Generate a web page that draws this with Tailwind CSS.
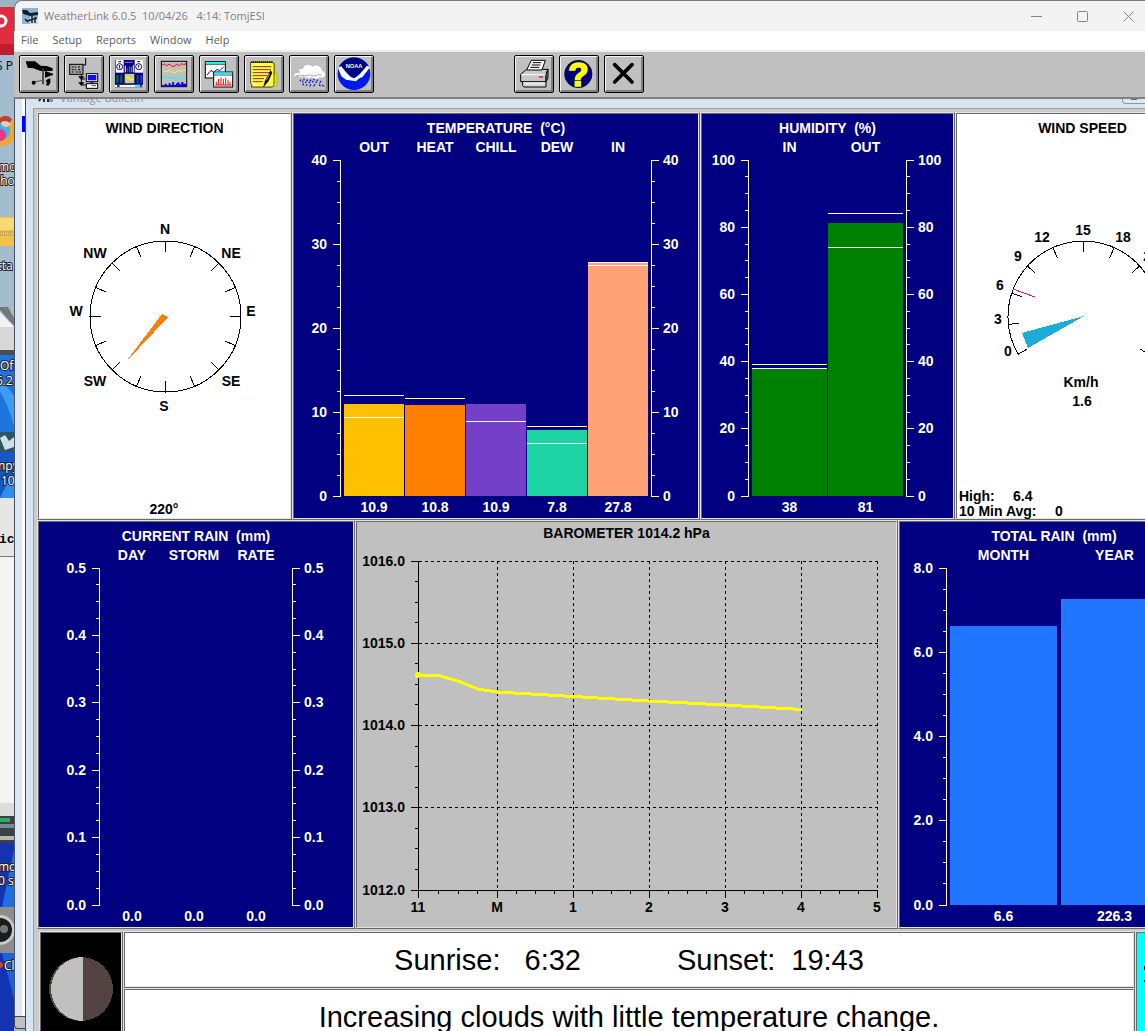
<!DOCTYPE html>
<html lang="en">
<head>
  <meta charset="UTF-8" />
  <meta name="viewport" content="width=device-width, initial-scale=1.0"/>
  <title>WeatherLink 6.0.5</title>
  <script src="https://cdn.jsdelivr.net/npm/@tailwindcss/browser@4"></script>
</head>
<body class="flex h-screen overflow-hidden bg-[#9db8cb] font-['Liberation_Sans',Arial,sans-serif]">

<!-- Desktop behind the window -->
<aside class="w-[14px] shrink-0 overflow-hidden">
  <svg width="14" height="1031" class="block" font-family="Open Sans, sans-serif" font-size="12">
    <rect width="14" height="1031" fill="#a3bdcf"/>
    <rect width="14" height="7" fill="#9fb4c3"/>
    <rect y="7" width="14" height="37" fill="#e32b3f"/>
    <rect y="44" width="14" height="11" fill="#c21a30"/>
    <circle cx="1" cy="21" r="5" fill="none" stroke="#fff" stroke-width="3"/>
    <text x="-4" y="70" fill="#000">S P</text>
    <circle cx="2" cy="131" r="15" fill="#f0a830"/>
    <circle cx="-1" cy="130" r="11" fill="#3fb3ee"/>
    <circle cx="6" cy="122" r="5" fill="#f3c9a8"/>
    <path d="M0 118q6-5 12 1l-2 4q-5-4-10 0z" fill="#b5453a"/>
    <circle cx="0" cy="135" r="6" fill="#e8368f"/>
    <text x="-2" y="171" fill="#fff" stroke="#222" stroke-width="2" paint-order="stroke">moi</text>
    <text x="-7" y="185" fill="#fff" stroke="#222" stroke-width="2" paint-order="stroke">Pho</text>
    <rect y="217" width="14" height="29" fill="#f0c24a"/>
    <rect y="218" width="14" height="12" fill="#f9d977"/>
    <path d="M0 232h14M0 235h14" stroke="#8a7a4a" stroke-dasharray="1 1"/>
    <text x="-4" y="270" fill="#fff" stroke="#222" stroke-width="2" paint-order="stroke">cta</text>
    <rect y="322" width="14" height="28" fill="#d8d8d8"/>
    <path d="M0 310l14 16v-8l-6-11h-8z" fill="#777"/>
    <path d="M0 312v15h14z" fill="#f2f2f2"/>
    <rect y="350" width="14" height="5" fill="#4b4d50"/>
    <rect y="355" width="14" height="77" fill="#1c74dc"/>
    <path d="M0 392q8 12 14 34v-30q-6-10-14-14z" fill="#3e9bf2"/>
    <text x="0" y="370" fill="#fff" stroke="#222" stroke-width="2" paint-order="stroke">Off</text>
    <text x="-4" y="385" fill="#fff" stroke="#222" stroke-width="2" paint-order="stroke">6.2</text>
    <rect y="432" width="14" height="20" fill="#2c5668"/>
    <path d="M0 438l5-3 4 6 5-4v10l-9 3z" fill="#cfe0e4"/>
    <rect y="452" width="14" height="46" fill="#1458c8"/>
    <path d="M0 498q8-18 14-22v22z" fill="#2f8df0"/>
    <text x="-2" y="470" fill="#fff" stroke="#222" stroke-width="2" paint-order="stroke">npy</text>
    <text x="1" y="485" fill="#fff" stroke="#222" stroke-width="2" paint-order="stroke">10</text>
    <rect y="498" width="14" height="59" fill="#e6e6e6"/>
    <text x="-1" y="543" font-family="Liberation Mono, monospace" font-weight="700" font-size="13">ic</text>
    <rect y="556" width="14" height="1" fill="#777"/>
    <rect y="557" width="14" height="247" fill="#f4f4f4"/>
    <rect y="803" width="14" height="13" fill="#dcdcdc"/>
    <rect y="816" width="14" height="29" fill="#3a4046"/>
    <rect y="818" width="10" height="4" fill="#2fae62"/>
    <rect y="824" width="14" height="4" fill="#7b8790"/>
    <rect y="836" width="14" height="4" fill="#b6b8b6"/>
    <rect y="843" width="14" height="188" fill="#1234b0"/>
    <path d="M14 850L2 907h12z" fill="#1d6fe6"/>
    <text x="-2" y="871" fill="#fff" stroke="#222" stroke-width="2" paint-order="stroke">moi</text>
    <text x="-2" y="885" fill="#fff" stroke="#222" stroke-width="2" paint-order="stroke">0 s</text>
    <rect y="907" width="14" height="46" fill="#8d8d8b"/>
    <circle cx="0" cy="930" r="15" fill="#c9c9c7"/>
    <circle cx="0" cy="930" r="12" fill="#191b1d"/>
    <circle cx="4" cy="929" r="4" fill="#70777b"/>
    <path d="M2 953l12 46v-46z" fill="#1a62e0"/>
    <text x="4" y="970" fill="#fff" stroke="#222" stroke-width="2" paint-order="stroke">Cl</text>
    <circle cx="0" cy="965" r="3" fill="#d8402c"/>
  </svg>
</aside>

<div class="flex min-w-0 flex-1 flex-col">

  <!-- Title bar -->
  <header class="flex h-[31px] shrink-0 items-center overflow-hidden rounded-tl-lg border-t border-l border-[#747b86] bg-[#f3f3f3] pl-[7px]">
    <svg class="mr-[6px] h-4 w-4" viewBox="0 0 16 16">
      <rect width="16" height="16" fill="#8fb4d2"/>
      <path d="M8 9h8v7H8z" fill="#c4dcec"/>
      <path d="M0 2l5 0 3 3 8-1v3L8 8 1 6z" fill="#16202a"/>
      <path d="M10 5v10M5 13l10-3M3 11l3 3M13 9v6" stroke="#16202a" stroke-width="1.5"/>
    </svg>
    <h1 class="font-['Open_Sans',sans-serif] text-[11px] whitespace-pre text-[#808080]">WeatherLink 6.0.5  10/04/26   4:14: TomjESI</h1>
    <div class="-mr-[6px] ml-auto flex h-full shrink-0 text-[#858585]">
      <button aria-label="Minimize" class="flex w-[46px] items-center justify-center"><svg width="11" height="11" fill="none" stroke="currentColor"><path d="M0 5.5h11"/></svg></button>
      <button aria-label="Maximize" class="flex w-[46px] items-center justify-center"><svg width="11" height="11" fill="none" stroke="currentColor"><rect x=".5" y=".5" width="10" height="10" rx="1"/></svg></button>
      <button aria-label="Close" class="flex w-[46px] items-center justify-center"><svg width="11" height="11" fill="none" stroke="currentColor"><path d="M.5.5l10 10M10.500.5l-10 10"/></svg></button>
    </div>
  </header>

  <nav class="flex h-[21px] shrink-0 items-center gap-[14px] border-b-2 border-[#ececec] bg-white pl-[7px] font-['Open_Sans',sans-serif] text-[11px] text-[#5c5c5c]">
    <button>File</button>
    <button>Setup</button>
    <button>Reports</button>
    <button>Window</button>
    <button>Help</button>
  </nav>

  <!-- Toolbar -->
  <div class="flex h-[47px] shrink-0 items-start gap-[5px] border-b-2 border-[#808080] bg-[#c0c0c0] pt-[3px] pl-[5px]">
    <button aria-label="Station" class="h-[38px] w-10 rounded-[2px] border border-black shadow-[inset_1px_1px_0_#f4f4f4,inset_-2px_-2px_0_#808080]">
      <svg class="h-9 w-[38px]" viewBox="3 3 114 108">
        <path d="M20 19h28l17 13 18 1 18 7v8H65l-22-8-17-2z"/>
        <path d="M72 40v48" stroke="#333" stroke-width="5"/>
        <path d="M78 48l24 8v4l-24 8z"/>
        <path d="M48 80l26-4" stroke="#555" stroke-width="3" fill="none"/>
        <circle cx="44" cy="83" r="6"/>
        <path d="M80 77l6-4 8-3v14l-6 8-8-2 4-6z"/>
      </svg>
    </button>
    <button aria-label="Download" class="h-[38px] w-10 rounded-[2px] border border-black shadow-[inset_1px_1px_0_#f4f4f4,inset_-2px_-2px_0_#808080]">
      <svg class="h-9 w-[38px]" viewBox="3 3 114 108">
        <path d="M65 9v21h-8" stroke="#000" stroke-width="3" fill="none"/>
        <rect x="17" y="28" width="40" height="30" fill="#a8a8a8" stroke="#000" stroke-width="3"/>
        <path d="M23 36h14M23 44h14M42 36h10M42 44h10M23 51h8M36 51h16" stroke="#000" stroke-width="3" stroke-dasharray="6 3"/>
        <path d="M52 58v14l12 0M52 72v18h14" stroke="#000" stroke-width="3" fill="none"/>
        <path d="M42 64h20l-10 10zM42 82h20l-10 10z"/>
        <rect x="67" y="56" width="34" height="24" fill="#fff" stroke="#000" stroke-width="3"/>
        <rect x="71" y="60" width="26" height="16" fill="#1010f0"/>
        <rect x="67" y="86" width="34" height="14" fill="#fff" stroke="#000" stroke-width="3"/>
        <path d="M78 83h12M82 92h14" stroke="#000" stroke-width="2"/>
      </svg>
    </button>
    <button aria-label="Bulletin" class="h-[38px] w-10 rounded-[2px] border border-black shadow-[inset_1px_1px_0_#f4f4f4,inset_-2px_-2px_0_#808080]">
      <svg class="h-9 w-[38px]" viewBox="3 3 114 108">
        <rect x="18" y="15" width="84" height="82" fill="#000080"/>
        <rect x="20" y="15" width="24" height="38" fill="#fff"/>
        <rect x="77" y="15" width="25" height="38" fill="#fff"/>
        <circle cx="32" cy="35" r="9" fill="#fff" stroke="#000080" stroke-width="3"/>
        <circle cx="89" cy="35" r="9" fill="#fff" stroke="#000080" stroke-width="3"/>
        <path d="M32 30v10M89 30v8M28 20h8M85 20h8" stroke="#000" stroke-width="3"/>
        <path d="M49 52V32M73 52V30" stroke="#fff" stroke-width="3"/>
        <path d="M55 52V38" stroke="#e02020" stroke-width="3"/>
        <path d="M61 52V34" stroke="#20a080" stroke-width="3"/>
        <path d="M67 52V36" stroke="#c080e0" stroke-width="3"/>
        <path d="M49 22h24" stroke="#fff" stroke-width="3" stroke-dasharray="3 3"/>
        <rect x="46" y="56" width="31" height="30" fill="#c8c8b0" stroke="#222" stroke-width="2"/>
        <path d="M50 66l8 2 6 6 10-2" stroke="#ff0" stroke-width="4" fill="none"/>
        <path d="M22 60h6v24h-6zM34 60h6v24h-6z" fill="#0a7040"/>
        <path d="M83 60h6v24h-6zM94 60h6v24h-6z" fill="#2040b0"/>
        <path d="M18 93h84" stroke="#fff" stroke-width="7"/>
        <path d="M24 93h8M92 93h8" stroke="#000" stroke-width="5"/>
        <path d="M78 93h14" stroke="#0ff" stroke-width="7"/>
      </svg>
    </button>
    <button aria-label="Plot" class="h-[38px] w-10 rounded-[2px] border border-black shadow-[inset_1px_1px_0_#f4f4f4,inset_-2px_-2px_0_#808080]">
      <svg class="h-9 w-[38px]" viewBox="3 3 114 108" fill="none" stroke-width="3">
        <rect x="22" y="19" width="76" height="76" stroke="#000"/>
        <path d="M25 29l6-2 7 5 8-5 6 6 8 1 8-6 8 4 7-6 6 3 7-3" stroke="#f00"/>
        <path d="M25 44l6 6 8 0 7-4 9 6 9 1 8-6 9 3 7-6 8 2" stroke="#ff0"/>
        <path d="M25 68l8-3 8 5 7-4 8 6 9-5 8 5 8-3 8-4 7 3" stroke="#0ff"/>
        <path d="M24 94v-4h8v-4h6v5h6v-7h5v5h6v-8h5v8h6v-4h5v-3h5v6h6v-7h6v5h8v8z" fill="#00f"/>
      </svg>
    </button>
    <button aria-label="Strip chart" class="h-[38px] w-10 rounded-[2px] border border-black shadow-[inset_1px_1px_0_#f4f4f4,inset_-2px_-2px_0_#808080]">
      <svg class="h-9 w-[38px]" viewBox="3 3 114 108" fill="none" stroke-width="3">
        <rect x="19" y="20" width="60" height="49" fill="#fff" stroke="#000"/>
        <path d="M20 24h58" stroke="#0ff" stroke-width="5"/>
        <path d="M19 28h60" stroke="#000" stroke-width="2"/>
        <path d="M24 60l12-14 8 7 10-10 8 4 12-11" stroke="#00f"/>
        <rect x="44" y="51" width="57" height="45" fill="#fff" stroke="#000"/>
        <path d="M45 55h55" stroke="#0ff" stroke-width="5"/>
        <path d="M44 60h57" stroke="#000" stroke-width="2"/>
        <path d="M52 90V80M59 90V72M66 90V68M73 90V72M80 90V68M87 90V74M93 90V80M49 90h48" stroke="#f00" stroke-width="3"/>
      </svg>
    </button>
    <button aria-label="Reports" class="h-[38px] w-10 rounded-[2px] border border-black shadow-[inset_1px_1px_0_#f4f4f4,inset_-2px_-2px_0_#808080]">
      <svg class="h-9 w-[38px]" viewBox="3 3 114 108" fill="none" stroke-width="3">
        <path d="M86 24h6v32h7v34l-8 6H26" fill="#e8e800" stroke="#b8b800"/>
        <path d="M20 22h66l4 6v62l-6 6H22l2-6-4-6z" fill="#ff4" stroke="#000" stroke-width="2"/>
        <path d="M22 21h64" stroke="#000" stroke-width="6" stroke-dasharray="3 3"/>
        <path d="M26 35h56M26 44h54M26 53h52M26 62h44M26 71h34M26 80h30" stroke="#a02020"/>
        <path d="M80 46L64 76l-6 20 14-16 12-26z" fill="#000" stroke="#000" stroke-width="1"/>
        <path d="M77 56L67 76" stroke="#aaa"/>
      </svg>
    </button>
    <button aria-label="Rain" class="h-[38px] w-10 rounded-[2px] border border-black shadow-[inset_1px_1px_0_#f4f4f4,inset_-2px_-2px_0_#808080]">
      <svg class="h-9 w-[38px]" viewBox="3 3 114 108" fill="none" stroke-width="3">
        <path d="M14 60q6-8 20-7l-4-10q8-2 12-1 2-13 16-13 10 1 12 6 12-7 22 0 8 5 6 12 10 3 10 12-2 10-14 8-10 8-26 0-14 6-24-3-12 5-16-2-8 3-14-2z" fill="#fff"/>
        <path d="M22 62q14-3 26 1 14-7 26 0 14-5 24-4" stroke="#a8a8a8"/>
        <path d="M36 74l-4 6M46 72l-6 10M56 74l-7 10M66 74l-6 10M76 72l-6 10M86 74l-6 10M96 78l-5 7M44 86l-4 6M54 88l-4 6M66 88l-5 7M78 88l-5 7M90 90l6 2M100 90l6 5" stroke="#1010d8" stroke-width="4" stroke-dasharray="5 2"/>
      </svg>
    </button>
    <button aria-label="NOAA" class="h-[38px] w-10 rounded-[2px] border border-black shadow-[inset_1px_1px_0_#f4f4f4,inset_-2px_-2px_0_#808080]">
      <svg class="h-9 w-[38px]" viewBox="3 3 114 108">
        <circle cx="60" cy="56" r="49" fill="#0018f0"/>
        <path d="M17 34A49 49 0 0 1 103 34L60 70z" fill="#000080"/>
        <path d="M12 38l10-4 14 18 14 14 11 4 14-10 24-28 9 5-22 28-12 6-8 8-10-2-20-3-14-10z" fill="#fff"/>
        <text x="60" y="40" font-family="Liberation Sans, sans-serif" font-size="17" font-weight="700" fill="#fff" text-anchor="middle">NOAA</text>
      </svg>
    </button>
    <button aria-label="Print" class="ml-[135px] h-[38px] w-10 rounded-[2px] border border-black shadow-[inset_1px_1px_0_#f4f4f4,inset_-2px_-2px_0_#808080]">
      <svg class="h-9 w-[38px]" viewBox="3 3 114 108" stroke="#000" stroke-width="3">
        <path d="M26 74h70v22H30l-4-4z" fill="#d8d8d8"/>
        <path d="M20 58l18-15h64l-6 15v22H20z" fill="#c8c8c8"/>
        <path d="M96 58l6-15v26l-6 11z" fill="#808080"/>
        <path d="M22 59h73" stroke="#fff"/>
        <path d="M38 45l14-29h42L84 45z" fill="#fff"/>
        <path d="M56 23h26M53 30h26M49 37h27" fill="none"/>
        <path d="M75 66h12" stroke="#f00" stroke-width="4"/>
        <path d="M28 84h64" stroke="#fff"/>
      </svg>
    </button>
    <button aria-label="Help" class="h-[38px] w-10 rounded-[2px] border border-black shadow-[inset_1px_1px_0_#f4f4f4,inset_-2px_-2px_0_#808080]">
      <svg class="h-9 w-[38px]" viewBox="3 3 114 108">
        <circle cx="58" cy="57" r="41" fill="#000080" stroke="#000" stroke-width="2"/>
        <text x="58" y="92" font-family="Liberation Sans, sans-serif" font-size="100" font-weight="700" fill="#ff0" stroke="#ff0" stroke-width="5" text-anchor="middle">?</text>
      </svg>
    </button>
    <button aria-label="Exit" class="h-[38px] w-10 rounded-[2px] border border-black shadow-[inset_1px_1px_0_#f4f4f4,inset_-2px_-2px_0_#808080]">
      <svg class="h-9 w-[38px]" viewBox="3 3 114 108">
        <path d="M32 29l52 52M84 29L32 81" stroke="#000" stroke-width="11" stroke-linecap="round"/>
      </svg>
    </button>
  </div>

  <!-- MDI area -->
  <main class="flex min-h-0 flex-1">
    <div class="flex w-3 shrink-0 flex-col border-r border-[#45454d] bg-[#9db8cb]">
      <div class="flex min-h-0 flex-1 border-l border-[#4c5260] bg-[#dbe7f3] pl-[7px]">
        <div class="flex-1 bg-white pt-[17px]">
          <div class="h-4 bg-[#0000ff]"></div>
        </div>
      </div>
      <div class="mb-[2px] h-[13px] rounded-bl border border-r-0 border-[#45454d] bg-[#c0c0c0]"></div>
    </div>

    <div class="flex min-w-0 flex-1 flex-col bg-[#d6e3f1] pl-[7px]">
      <div class="flex h-[9px] shrink-0 items-end overflow-hidden bg-[#d9e4ef] pl-[5px]">
        <svg class="mr-[6px] h-4 w-4 shrink-0" viewBox="0 0 16 16">
          <path d="M3 6l-2 3M6 5v5M10 5v5" stroke="#1c2631" stroke-width="2"/>
          <path d="M11 6h4v4h-4z" fill="#6fa0c8"/>
        </svg>
        <p class="font-['Open_Sans',sans-serif] text-[11px] leading-[21px] text-[#8e949b]">Vantage Bulletin</p>
        <div class="mb-[4px] ml-auto h-5 w-[23px] shrink-0 rounded-bl border border-r-0 border-[#8b97a8] bg-[#dfe8f2] px-[8px] pt-[13px]"><div class="h-[2px] bg-[#5b6b88]"></div></div>
      </div>

      <!-- Bulletin panels -->
      <div class="flex min-h-0 flex-1 flex-col overflow-hidden border-t border-l border-[#a0a0a0] bg-[#cacaca] pt-[3px] pl-[3px]">
        <div class="grid shrink-0 grid-cols-[255px_408px_255px_minmax(255px,1fr)] text-[14px] font-bold">

          <section class="border border-t-[#e3e3e3] border-r-[#696969] border-b-[#696969] border-l-[#e3e3e3]">
            <div class="border border-t-[#696969] border-r-[#e3e3e3] border-b-[#e3e3e3] border-l-[#696969] bg-white pt-[5px] text-center text-black">
              <h2 class="leading-[19px]">WIND DIRECTION</h2>
              <svg id="windDir" class="block h-[380px] w-full" fill="none" stroke="#000" shape-rendering="crispEdges"></svg>
            </div>
          </section>

          <section class="border border-t-[#e3e3e3] border-r-[#696969] border-b-[#696969] border-l-[#e3e3e3]">
            <div class="border border-t-[#696969] border-r-[#e3e3e3] border-b-[#e3e3e3] border-l-[#696969] bg-[#000080] pt-[5px] text-center text-white">
              <h2 class="leading-[19px] whitespace-pre">TEMPERATURE  (°C)</h2>
              <svg id="temperature" class="block h-[380px] w-full" fill="#fff"></svg>
            </div>
          </section>

          <section class="border border-t-[#e3e3e3] border-r-[#696969] border-b-[#696969] border-l-[#e3e3e3]">
            <div class="border border-t-[#696969] border-r-[#e3e3e3] border-b-[#e3e3e3] border-l-[#696969] bg-[#000080] pt-[5px] text-center text-white">
              <h2 class="leading-[19px] whitespace-pre">HUMIDITY  (%)</h2>
              <svg id="humidity" class="block h-[380px] w-full" fill="#fff"></svg>
            </div>
          </section>

          <section class="border border-t-[#e3e3e3] border-r-[#696969] border-b-[#696969] border-l-[#e3e3e3]">
            <div class="border border-t-[#696969] border-r-[#e3e3e3] border-b-[#e3e3e3] border-l-[#696969] bg-white pt-[5px] text-center text-black">
              <h2 class="leading-[19px]">WIND SPEED</h2>
              <svg id="windSpeed" class="block h-[380px] w-full overflow-visible" fill="none" stroke="#000" shape-rendering="crispEdges"></svg>
            </div>
          </section>
        </div>

        <div class="grid shrink-0 grid-cols-[318px_543px_minmax(312px,1fr)] text-[14px] font-bold">
          <section class="border border-t-[#e3e3e3] border-r-[#696969] border-b-[#696969] border-l-[#e3e3e3]">
            <div class="border border-t-[#696969] border-r-[#e3e3e3] border-b-[#e3e3e3] border-l-[#696969] bg-[#000080] pt-[5px] text-center text-white">
              <h2 class="leading-[19px] whitespace-pre">CURRENT RAIN  (mm)</h2>
              <svg id="currentRain" class="block h-[381px] w-full" fill="#fff"></svg>
            </div>
          </section>

          <section class="border border-t-[#e3e3e3] border-r-[#696969] border-b-[#696969] border-l-[#e3e3e3]">
            <div class="border border-t-[#696969] border-r-[#e3e3e3] border-b-[#e3e3e3] border-l-[#696969] bg-[#c0c0c0] pt-[2px] text-center text-black">
              <h2 class="leading-[19px]">BAROMETER 1014.2 hPa</h2>
              <svg id="barometer" class="block h-[384px] w-full" fill="#000"></svg>
            </div>
          </section>

          <section class="border border-t-[#e3e3e3] border-r-[#696969] border-b-[#696969] border-l-[#e3e3e3]">
            <div class="border border-t-[#696969] border-r-[#e3e3e3] border-b-[#e3e3e3] border-l-[#696969] bg-[#000080] pt-[5px] text-center text-white">
              <h2 class="leading-[19px] whitespace-pre">TOTAL RAIN  (mm)</h2>
              <svg id="totalRain" class="block h-[381px] w-full" fill="#fff"></svg>
            </div>
          </section>
        </div>

        <!-- Moon phase, sun times, forecast -->
        <div class="mt-[2px] flex h-[114px] shrink-0 pl-[2px] text-[29px] whitespace-nowrap text-black">
          <div class="w-[84px] shrink-0 border border-t-[#e3e3e3] border-r-[#696969] border-b-[#696969] border-l-[#e3e3e3]">
            <div class="h-full border border-t-[#696969] border-r-[#e3e3e3] border-b-[#e3e3e3] border-l-[#696969] bg-black">
              <svg width="80" height="110" shape-rendering="crispEdges">
                <circle cx="40" cy="56" r="32" fill="#524242"/>
                <path d="M42 24A32 32 0 1 0 42 88z" fill="#c0c0c0"/>
              </svg>
            </div>
          </div>
          <div class="flex min-w-0 flex-1 flex-col">
            <div class="h-[57px] border border-t-[#e3e3e3] border-r-[#696969] border-b-[#696969] border-l-[#e3e3e3]">
              <div class="flex h-full items-center justify-center gap-24 border border-t-[#696969] border-r-[#e3e3e3] border-b-[#e3e3e3] border-l-[#696969] bg-white pt-[3px]">
                <p class="flex gap-6"><span>Sunrise:</span><span>6:32</span></p>
                <p class="flex gap-4"><span>Sunset:</span><span>19:43</span></p>
              </div>
            </div>
            <div class="h-[57px] border border-t-[#e3e3e3] border-r-[#696969] border-b-[#696969] border-l-[#e3e3e3]">
              <p class="flex h-full items-center justify-center border border-t-[#696969] border-r-[#e3e3e3] border-b-[#e3e3e3] border-l-[#696969] bg-white pt-[3px]">Increasing clouds with little temperature change.</p>
            </div>
          </div>
          <div class="w-[10px] shrink-0 border border-r-0 border-t-[#e3e3e3] border-b-[#696969] border-l-[#e3e3e3]">
            <div class="flex h-full flex-col items-end gap-[10px] border border-r-0 border-t-[#696969] border-b-[#e3e3e3] border-l-[#696969] bg-[#00ffff] pt-[33px]">
              <div class="h-1 w-px bg-black"></div>
              <div class="h-[2px] w-px bg-black"></div>
            </div>
          </div>
        </div>
      </div>
    </div>
  </main>
</div>

<script>
  const rect = (x, y, w, h, fill) => `<rect x="${x}" y="${y}" width="${w}" height="${h}" fill="${fill}"/>`;
  // text is placed by the middle of its capitals
  const label = (x, y, s, anchor = 'middle', fill = 'inherit') =>
    `<text x="${x}" y="${y + 5}" text-anchor="${anchor}" stroke="none" style="fill:${fill}">${s}</text>`;

  function barChart(id, o) {
    const top = 22, h = o.height;
    const yOf = v => top + Math.floor(h * (1 - v / o.max) + 0.001);
    let out = '';
    for (const [x, dir] of [[o.left, -1], [o.right, 1]]) {
      out += rect(x, top, 1, h + 1, '#fff');
      const n = Math.round(o.max / o.minor);
      for (let i = 0; i <= n; i++) {
        const v = i * o.minor, y = yOf(v);
        const major = i % o.per === 0;
        const len = major ? 7 : 3;
        out += rect(dir < 0 ? x - len : x + 1, y, len, 1, '#fff');
        if (major) out += label(dir < 0 ? x - 13 : x + 12, y, v.toFixed(o.digits), dir < 0 ? 'end' : 'start', '#fff');
      }
    }
    for (const b of o.bars) {
      const mid = b.x + o.barWidth / 2;
      out += label(mid, 9, b.name, 'middle', '#fff');
      out += label(mid, top + h + 11, b.text, 'middle', '#fff');
      if (b.value) out += rect(b.x, yOf(b.value), o.barWidth, top + h - yOf(b.value), b.color);
      if (b.hi) out += rect(b.x, yOf(b.hi), o.barWidth, 1, '#fff');
      if (b.lo) out += rect(b.x, yOf(b.lo), o.barWidth, 1, '#fff');
    }
    document.getElementById(id).innerHTML = out;
  }

  barChart('temperature', {
    height: 336, max: 40, minor: 2.5, per: 4, digits: 0, left: 46, right: 357, barWidth: 60,
    bars: [
      { x: 50, name: 'OUT', value: 10.9, text: '10.9', hi: 12, lo: 9.4, color: '#ffc000' },
      { x: 111, name: 'HEAT', value: 10.8, text: '10.8', hi: 11.6, color: '#ff8000' },
      { x: 172, name: 'CHILL', value: 10.9, text: '10.9', lo: 8.9, color: '#7540c8' },
      { x: 233, name: 'DEW', value: 7.8, text: '7.8', hi: 8.3, lo: 6.2, color: '#1cd4a4' },
      { x: 294, name: 'IN', value: 27.8, text: '27.8', hi: 27.8, lo: 27.4, color: '#ffa377' },
    ],
  });
  barChart('humidity', {
    height: 336, max: 100, minor: 5, per: 4, digits: 0, left: 46, right: 204, barWidth: 75,
    bars: [
      { x: 50, name: 'IN', value: 38, text: '38', hi: 39, lo: 38, color: '#008000' },
      { x: 126, name: 'OUT', value: 81, text: '81', hi: 84, lo: 74, color: '#008000' },
    ],
  });
  barChart('currentRain', {
    height: 337, max: 0.5, minor: 0.025, per: 4, digits: 1, left: 60, right: 253, barWidth: 62,
    bars: [
      { x: 62, name: 'DAY', value: 0, text: '0.0' },
      { x: 124, name: 'STORM', value: 0, text: '0.0' },
      { x: 186, name: 'RATE', value: 0, text: '0.0' },
    ],
  });
  barChart('totalRain', {
    height: 337, max: 8, minor: 0.5, per: 4, digits: 1, left: 46, right: 272, barWidth: 107,
    bars: [
      { x: 50, name: 'MONTH', value: 6.6, text: '6.6', color: '#2076ff' },
      { x: 161, name: 'YEAR', value: 7.26, text: '226.3', color: '#2076ff' },
    ],
  });

  // point on a dial, compass degrees
  const CX = 126.5, CY = 178.5, R = 75.5;
  const polar = (deg, r) => {
    const a = deg * Math.PI / 180;
    return [(CX + r * Math.sin(a)).toFixed(1), (CY - r * Math.cos(a)).toFixed(1)];
  };
  const tick = deg => `<path d="M${polar(deg, R)}L${polar(deg, R - 11)}"/>`;

  let dial = `<circle cx="${CX}" cy="${CY}" r="${R}"/>`;
  for (let i = 0; i < 16; i++) dial += tick(i * 22.5);
  for (const [x, y, s] of [[126, 91, 'N'], [192, 115, 'NE'], [212, 173, 'E'], [192, 243, 'SE'],
    [125, 268, 'S'], [56, 243, 'SW'], [37, 173, 'W'], [56, 115, 'NW'], [125, 371, '220°']]) {
    dial += label(x, y, s, 'middle', '#000');
  }
  dial += '<path d="M86 225L123 176L129 179Z" fill="#ff8000" stroke="none"/>';
  document.getElementById('windDir').innerHTML = dial;

  let speed = `<path d="M${polar(240, R)}A${R} ${R} 0 1 1 ${polar(120, R)}"/>`;
  for (let i = 0; i <= 10; i++) speed += tick(240 + i * 24);
  for (const [x, y, s] of [[51, 213, '0'], [41, 181, '3'], [43, 147, '6'], [61, 118, '9'], [85, 99, '12'],
    [126, 92, '15'], [166, 99, '18'], [194, 118, '21'], [211, 147, '24'], [213, 181, '27'], [204, 213, '30'],
    [124, 244, 'Km/h'], [125, 263, '1.6']]) {
    speed += label(x, y, s, 'middle', '#000');
  }
  speed += '<path d="M56 151l22 8" stroke="#e8204c"/>';
  speed += '<path d="M127 178L65 195L71 210Z" fill="#1cacd8" stroke="none"/>';
  speed += label(2, 358, 'High:', 'start', '#000') + label(56, 358, '6.4', 'start', '#000');
  speed += label(2, 373, '10 Min Avg:', 'start', '#000') + label(98, 373, '0', 'start', '#000');
  document.getElementById('windSpeed').innerHTML = speed;

  // barometer trend
  const hours = [['11', 61], ['M', 140], ['1', 216], ['2', 292], ['3', 368], ['4', 444], ['5', 520]];
  let baro = rect(61, 18, 1, 330, '#000') + rect(61, 347, 460, 1, '#000');
  for (let i = 0; i <= 16; i++) {
    const y = 18 + Math.floor(i * 329 / 16);
    const major = i % 4 === 0;
    baro += rect(major ? 54 : 58, y, major ? 7 : 3, 1, '#000');
    if (major) {
      baro += label(48, y, (1016 - i / 4).toFixed(1), 'end', '#000');
      if (i < 16) baro += `<path d="M62 ${y + 0.5}H521" stroke="#000" stroke-dasharray="3 3"/>`;
    }
  }
  hours.forEach(([name, x], i) => {
    baro += rect(x, 348, 1, 7, '#000') + label(x, 364, name, 'middle', '#000');
    if (i) {
      baro += `<path d="M${x + 0.5} 18V347" stroke="#000" stroke-dasharray="3 3"/>`;
      for (let q = 1; q < 4; q++) {
        baro += rect(Math.round(x - q * (x - hours[i - 1][1]) / 4), 348, 1, 3, '#000');
      }
    }
  });
  baro += '<circle cx="61" cy="132" r="3" fill="#ff0"/>';
  baro += '<path d="M61 132.500H82L101 138L121 146L140 149L216 153.500L292 158L368 162L445 166.500" fill="none" stroke="#ff0" stroke-width="3" shape-rendering="crispEdges"/>';
  document.getElementById('barometer').innerHTML = baro;
</script>
</body>
</html>
